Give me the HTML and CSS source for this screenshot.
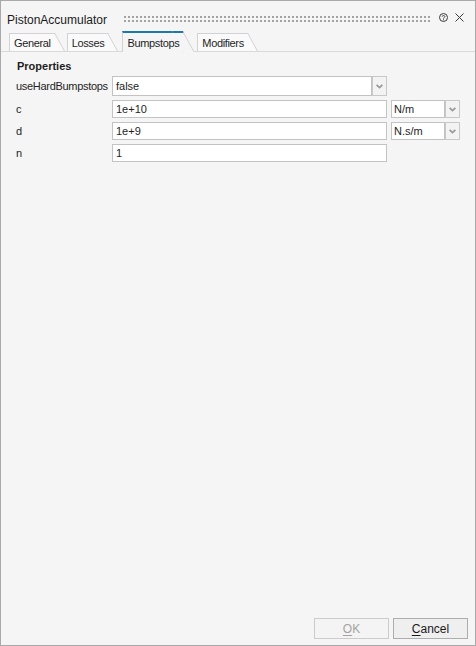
FILE: index.html
```html
<!DOCTYPE html>
<html>
<head>
<meta charset="utf-8">
<link rel="stylesheet" href="styles.css">
</head>
<body>
<div class="window">
  <div class="titlebar">
    <span class="title">PistonAccumulator</span>
    <span class="grip"></span>
    <svg class="help" width="9" height="9" viewBox="0 0 9 9"><circle cx="4.5" cy="4.5" r="4" fill="none" stroke="#3a3a3a" stroke-width="1"/><path d="M3.1 3.6 C3.1 2.2 5.9 2.2 5.9 3.6 C5.9 4.5 4.5 4.5 4.5 5.6" fill="none" stroke="#3a3a3a" stroke-width="1"/><rect x="4" y="6.3" width="1" height="1" fill="#3a3a3a"/></svg>
    <svg class="close" width="9" height="9" viewBox="0 0 9 9"><path d="M0.5 0.5 L8.5 8.5 M8.5 0.5 L0.5 8.5" stroke="#3a3a3a" stroke-width="1"/></svg>
  </div>
  <div class="tabs">
    <div class="tab">General</div>
    <div class="tab">Losses</div>
    <div class="tab active">Bumpstops</div>
    <div class="tab">Modifiers</div>
  </div>
  <div class="panel">
    <div class="section">Properties</div>
    <div class="row">
      <span class="label">useHardBumpstops</span>
      <div class="field combo-field">false</div>
      <div class="drop tall"><svg width="7" height="5" viewBox="0 0 7 5"><polyline points="0.6,0.8 3.5,3.6 6.4,0.8" fill="none" stroke="#999999" stroke-width="1.8"/></svg></div>
    </div>
    <div class="row">
      <span class="label">c</span>
      <div class="field value-field">1e+10</div>
      <div class="field unit-field">N/m</div>
      <div class="drop"><svg width="7" height="5" viewBox="0 0 7 5"><polyline points="0.6,0.8 3.5,3.6 6.4,0.8" fill="none" stroke="#999999" stroke-width="1.8"/></svg></div>
    </div>
    <div class="row">
      <span class="label">d</span>
      <div class="field value-field">1e+9</div>
      <div class="field unit-field">N.s/m</div>
      <div class="drop"><svg width="7" height="5" viewBox="0 0 7 5"><polyline points="0.6,0.8 3.5,3.6 6.4,0.8" fill="none" stroke="#999999" stroke-width="1.8"/></svg></div>
    </div>
    <div class="row">
      <span class="label">n</span>
      <div class="field value-field">1</div>
    </div>
  </div>
  <div class="footer">
    <button class="btn" disabled><u>O</u>K</button>
    <button class="btn"><u>C</u>ancel</button>
  </div>
</div>
</body>
</html>
```
FILE: styles.css
```css
html, body {
  margin: 0;
  padding: 0;
  background: #f5f5f5;
}
body {
  font-family: "Liberation Sans", Arial, sans-serif;
  color: #1e1e1e;
}
.window {
  width: 476px;
  height: 646px;
  box-sizing: border-box;
  border: 1px solid #a9a9a9;
  background: #f5f5f5;
  display: flex;
  flex-direction: column;
}
.titlebar {
  display: flex;
  align-items: flex-start;
  height: 30px;
  box-sizing: border-box;
  padding: 11px 11px 0 6px;
}
.title {
  font-size: 12px;
  line-height: 16px;
  color: #1a1a1a;
}
.grip {
  flex: 1;
  height: 6px;
  margin: 4px 0 0 17px;
  background-color: #a3a3a3;
  background-image: linear-gradient(90deg, #f5f5f5 2px, transparent 2px), linear-gradient(#f5f5f5 2px, transparent 2px);
  background-size: 4px 4px;
  background-position: -2px -2px;
}
.help {
  margin: 1px 0 0 8px;
}
.close {
  margin: 1px 0 0 7px;
}
.tabs {
  display: flex;
  align-items: flex-end;
  height: 20px;
  padding-left: 8px;
  border-bottom: 1px solid #d9d9d9;
}
.tab {
  position: relative;
  z-index: 0;
  font-size: 11px;
  line-height: 14px;
  letter-spacing: -0.35px;
  padding: 2px 4px 1px 4px;
  margin-right: 12px;
  border-top: 1px solid #d2d2d2;
  border-left: 1px solid #d2d2d2;
  background: #fafafa;
  color: #1e1e1e;
}
.tab::after {
  content: "";
  position: absolute;
  z-index: -1;
  top: -1px;
  bottom: 0;
  left: calc(100% - 11px);
  width: 11px;
  box-sizing: border-box;
  border-top: 1px solid #d2d2d2;
  border-right: 1px solid #d2d2d2;
  background: inherit;
  transform: skewX(29deg);
  transform-origin: top left;
}
.tab.active {
  background: #f5f5f5;
  border-top: 2px solid #1b79b0;
  padding: 3px 4px 2px 4px;
  margin: 0 14px -1px 2px;
}
.tab.active::after {
  top: -2px;
  border-top: 2px solid #1b79b0;
}
.panel {
  flex: 1;
  padding: 7px 0 0 15px;
}
.section {
  font-size: 11px;
  line-height: 14px;
  font-weight: bold;
  padding-left: 1px;
  margin-bottom: 3px;
}
.row {
  display: flex;
  align-items: center;
  margin-bottom: 4px;
}
.label {
  width: 96px;
  font-size: 11px;
  line-height: 14px;
  letter-spacing: -0.3px;
}
.field {
  box-sizing: border-box;
  height: 18px;
  border: 1px solid #c3c3c3;
  background: #ffffff;
  font-size: 11px;
  line-height: 16px;
  padding-left: 3px;
  color: #1e1e1e;
}
.combo-field {
  width: 260px;
  height: 20px;
  line-height: 18px;
}
.value-field {
  width: 275px;
}
.unit-field {
  width: 54px;
  margin-left: 4px;
  padding-left: 2px;
}
.drop {
  box-sizing: border-box;
  width: 15px;
  height: 18px;
  border: 1px solid #c8c8c8;
  background: #f3f3f3;
  display: flex;
  align-items: center;
  justify-content: center;
}
.drop.tall {
  height: 20px;
}
.footer {
  display: flex;
  justify-content: flex-end;
  gap: 4px;
  padding: 0 7px 6px 0;
}
.btn {
  width: 75px;
  height: 21px;
  box-sizing: border-box;
  border: 1px solid #adadad;
  background: #efefef;
  font-family: "Liberation Sans", Arial, sans-serif;
  font-size: 12px;
  color: #1a1a1a;
  padding: 0;
  margin: 0;
}
.btn:disabled {
  border-color: #cccccc;
  background: #f4f4f4;
  color: #a3a3a3;
}
.btn u {
  text-decoration-thickness: 1px;
  text-underline-offset: 2px;
}
```
